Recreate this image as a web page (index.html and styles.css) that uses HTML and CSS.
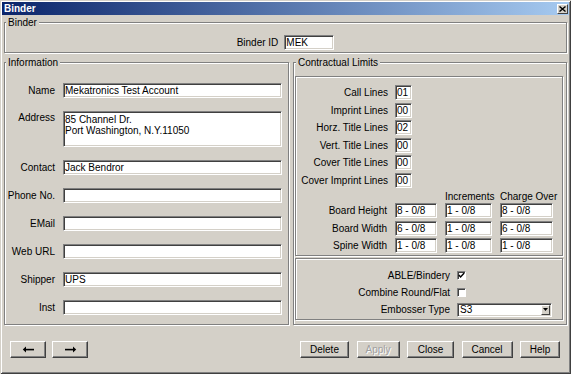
FILE: index.html
```html
<!DOCTYPE html>
<html lang="en">
<head>
  <meta charset="UTF-8" />
  <title>Binder</title>
  <link rel="stylesheet" href="styles.css">
</head>
<body>
  <div class="window">
    <div class="titlebar">
      <span>Binder</span>
      <span class="close">
        <svg width="7" height="6" viewBox="0 0 7 6"><path d="M0.5 0.5 L6.5 5.5 M6.5 0.5 L0.5 5.5" stroke="#000" stroke-width="1.4"/></svg>
      </span>
    </div>

    <div class="content">
      <fieldset class="group binder">
        <legend>Binder</legend>
        <div class="binder-row">
          <label>Binder ID</label>
          <input class="field binder-id" type="text" value="MEK" />
        </div>
      </fieldset>

      <div class="columns">
        <fieldset class="group info">
          <legend>Information</legend>
          <div class="info-grid">
            <label>Name</label>
            <input class="field" type="text" value="Mekatronics Test Account" />
            <label class="top">Address</label>
            <textarea class="field address">85 Channel Dr.
Port Washington, N.Y.11050</textarea>
            <label>Contact</label>
            <input class="field" type="text" value="Jack Bendror" />
            <label>Phone No.</label>
            <input class="field" type="text" value="" />
            <label>EMail</label>
            <input class="field" type="text" value="" />
            <label>Web URL</label>
            <input class="field" type="text" value="" />
            <label>Shipper</label>
            <input class="field" type="text" value="UPS" />
            <label>Inst</label>
            <input class="field" type="text" value="" />
          </div>
        </fieldset>

        <fieldset class="group limits">
          <legend>Contractual Limits</legend>

          <div class="panel lines-panel">
            <div class="lines-grid">
              <label>Call Lines</label><input class="field small" type="text" value="01" />
              <label>Imprint Lines</label><input class="field small" type="text" value="00" />
              <label>Horz. Title Lines</label><input class="field small" type="text" value="02" />
              <label>Vert. Title Lines</label><input class="field small" type="text" value="00" />
              <label>Cover Title Lines</label><input class="field small" type="text" value="00" />
              <label>Cover Imprint Lines</label><input class="field small" type="text" value="00" />
            </div>

            <div class="board-head">
              <span></span><span></span><span>Increments</span><span>Charge Over</span>
            </div>
            <div class="board-grid">
              <label>Board Height</label>
              <input class="field" type="text" value="8 - 0/8" />
              <input class="field" type="text" value="1 - 0/8" />
              <input class="field" type="text" value="8 - 0/8" />
              <label>Board Width</label>
              <input class="field" type="text" value="6 - 0/8" />
              <input class="field" type="text" value="1 - 0/8" />
              <input class="field" type="text" value="6 - 0/8" />
              <label>Spine Width</label>
              <input class="field" type="text" value="1 - 0/8" />
              <input class="field" type="text" value="1 - 0/8" />
              <input class="field" type="text" value="1 - 0/8" />
            </div>
          </div>

          <div class="panel options-panel">
            <div class="options-grid">
              <label>ABLE/Bindery</label>
              <span class="check">
                <svg width="7" height="7" viewBox="0 0 7 7"><polyline points="0.8,3 2.6,5 6.2,1" fill="none" stroke="#000" stroke-width="1.4"/></svg>
              </span>
              <label>Combine Round/Flat</label>
              <span class="check"></span>
              <label>Embosser Type</label>
              <div class="field select">
                <span>S3</span>
                <span class="drop">
                  <svg width="5" height="3" viewBox="0 0 5 3"><polygon points="0,0 5,0 2.5,3" fill="#000"/></svg>
                </span>
              </div>
            </div>
          </div>
        </fieldset>
      </div>

      <div class="footer">
        <div class="nav">
          <button class="btn arrow">
            <svg width="13" height="7" viewBox="0 0 13 7"><path d="M4 0.5 L0.8 3.5 L4 6.5 Z" fill="#000"/><rect x="3" y="2.8" width="9" height="1.6" fill="#000"/></svg>
          </button>
          <button class="btn arrow">
            <svg width="13" height="7" viewBox="0 0 13 7"><path d="M9 0.5 L12.2 3.5 L9 6.5 Z" fill="#000"/><rect x="1" y="2.8" width="9" height="1.6" fill="#000"/></svg>
          </button>
        </div>
        <div class="actions">
          <button class="btn w-delete">Delete</button>
          <button class="btn w-apply" disabled>Apply</button>
          <button class="btn w-close">Close</button>
          <button class="btn w-cancel">Cancel</button>
          <button class="btn w-help">Help</button>
        </div>
      </div>
    </div>
  </div>
</body>
</html>
```

FILE: styles.css
```css
body {
  margin: 0;
  font: 10px "Liberation Sans", Arial, sans-serif;
  color: #000;
  background: #d4d0c8;
}

.window {
  width: 571px;
  height: 374px;
  box-sizing: border-box;
  padding: 2px;
  display: flex;
  flex-direction: column;
  box-shadow: inset 1px 1px #d4d0c8, inset -1px -1px #404040,
              inset 2px 2px #fff, inset -2px -2px #808080;
}

.titlebar {
  height: 13px;
  display: flex;
  align-items: center;
  justify-content: space-between;
  padding: 0 1px 0 2px;
  background: linear-gradient(to right, #0a246a, #a6caf0);
  color: #fff;
  font-weight: bold;
  font-size: 10px;
}

.close {
  width: 11px;
  height: 10px;
  box-sizing: border-box;
  display: flex;
  align-items: center;
  justify-content: center;
  background: #d4d0c8;
  border: 1px solid;
  border-color: #fff #404040 #404040 #fff;
}

.content {
  flex: 1;
  display: flex;
  flex-direction: column;
  padding: 1px 2px 0;
}

/* etched group boxes */
.group {
  margin: 0;
  padding: 0;
  min-width: 0;
  border: 1px solid #808080;
  box-shadow: inset 1px 1px #fff, 1px 1px #fff;
}

.group legend {
  padding: 0 2px;
  margin-left: 1px;
  line-height: 13px;
  background: #d4d0c8;
}

.panel {
  border: 1px solid #808080;
  box-shadow: inset 1px 1px #fff, 1px 1px #fff;
}

label {
  white-space: nowrap;
}

.field {
  box-sizing: border-box;
  height: 15px;
  margin: 0;
  padding: 0 1px;
  border: 1px solid;
  border-color: #808080 #fff #fff #808080;
  box-shadow: inset 1px 1px #404040, inset -1px -1px #d4d0c8;
  background: #fff;
  font: inherit;
  color: #000;
  outline: none;
  min-width: 0;
  width: 100%;
}

/* binder id */
.binder {
  padding: 6px 0 2px;
}

.binder-row {
  display: flex;
  align-items: center;
  justify-content: center;
  gap: 6px;
}

.binder-id {
  width: 50px;
}

.columns {
  display: flex;
  gap: 4px;
  margin-top: 3px;
  height: 269px;
}

/* information */
.info {
  width: 285px;
  box-sizing: border-box;
  padding-top: 14px;
}

.info-grid {
  display: grid;
  grid-template-columns: 50px 219px;
  column-gap: 8px;
  row-gap: 13px;
  grid-auto-rows: 15px;
  align-items: center;
}

.info-grid label {
  text-align: right;
}

.info-grid label.top {
  align-self: start;
  padding-top: 1px;
}

.address {
  height: 36px;
  grid-row: span 1;
  resize: none;
  overflow: hidden;
  line-height: 11px;
  padding-top: 2px;
}

.info-grid {
  grid-template-rows: 15px 36px repeat(6, 15px);
}

/* contractual limits */
.limits {
  flex: 1;
  box-sizing: border-box;
  padding: 7px 3px 0 1px;
}

.lines-panel {
  height: 180px;
  box-sizing: border-box;
  padding-top: 8px;
}

.lines-grid {
  display: grid;
  grid-template-columns: 92px 17px;
  column-gap: 7px;
  row-gap: 2.6px;
  grid-auto-rows: 15px;
  align-items: center;
}

.lines-grid label,
.board-grid label,
.options-grid label {
  text-align: right;
}

.small {
  padding: 0 1px;
}

.board-head,
.board-grid {
  display: grid;
  grid-template-columns: 91px 42px 47px 53px;
  column-gap: 8px;
  align-items: center;
}

.board-head {
  height: 13px;
  margin-top: 2px;
  grid-template-columns: 91px 42px 47px 60px;
}

.board-head span {
  white-space: nowrap;
}

.board-grid {
  grid-auto-rows: 15px;
  row-gap: 2.6px;
}

.options-panel {
  margin-top: 2px;
  padding: 9px 0 2px;
}

.options-grid {
  display: grid;
  grid-template-columns: 154px 95px;
  column-gap: 7px;
  row-gap: 2px;
  grid-auto-rows: 15px;
  align-items: center;
}

.check {
  width: 9px;
  height: 9px;
  box-sizing: border-box;
  display: flex;
  align-items: center;
  justify-content: center;
  background: #fff;
  border: 1px solid;
  border-color: #808080 #fff #fff #808080;
  box-shadow: inset 1px 1px #404040;
}

.select {
  display: flex;
  align-items: center;
  justify-content: space-between;
  height: 14px;
  padding: 0 1px 0 2px;
}

.drop {
  width: 9px;
  height: 10px;
  box-sizing: border-box;
  display: flex;
  align-items: center;
  justify-content: center;
  background: #d4d0c8;
  border: 1px solid;
  border-color: #fff #404040 #404040 #fff;
}

/* footer buttons */
.footer {
  display: flex;
  justify-content: space-between;
  padding: 16px 7px 0 6px;
}

.nav,
.actions {
  display: flex;
}

.nav {
  gap: 6px;
}

.actions {
  gap: 7.5px;
}

.btn {
  height: 17px;
  box-sizing: border-box;
  padding: 0;
  display: flex;
  align-items: center;
  justify-content: center;
  font: inherit;
  color: #000;
  background: #d4d0c8;
  border: 1px solid;
  border-color: #fff #404040 #404040 #fff;
  box-shadow: inset -1px -1px #808080;
}

.btn:disabled {
  color: #a0a0a0;
  text-shadow: 1px 1px #fff;
}

.arrow { width: 36px; }
.w-delete { width: 49px; }
.w-apply { width: 43px; }
.w-close { width: 47px; }
.w-cancel { width: 51px; }
.w-help { width: 40px; }
```
